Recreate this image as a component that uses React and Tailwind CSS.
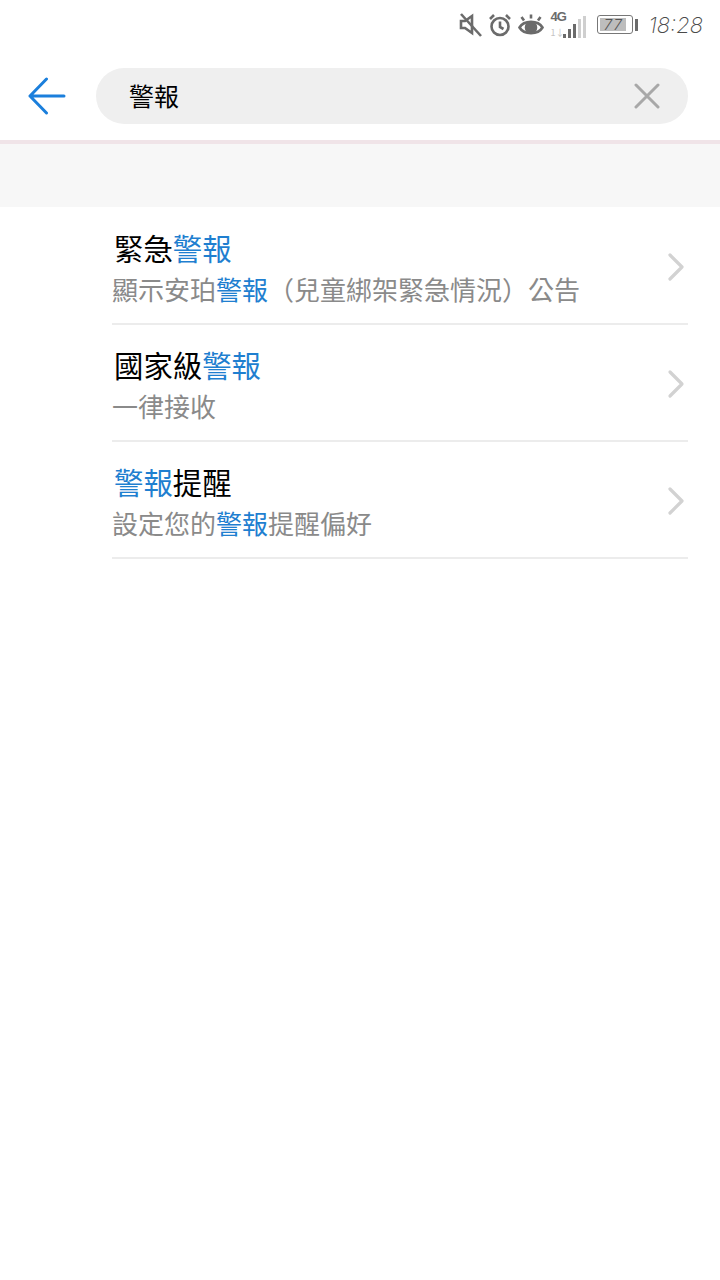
import React from "react";

const cjk = { fontFamily: '"Noto Sans CJK TC", "Noto Sans", sans-serif' };

function Hl({ children }) {
  return <span className="text-[#1f7fd0]">{children}</span>;
}

function Row({ title, sub }) {
  return (
    <div className="ml-[112px] mr-8 h-[117px] border-b-2 border-[#ececec] flex items-center justify-between">
      <div className="pt-[3px]">
        <div className="text-[29.4px] leading-[36px] text-black ml-[2px]">{title}</div>
        <div className="text-[26px] leading-[34px] mt-[7px] text-[#8a8a8a] whitespace-nowrap">{sub}</div>
      </div>
      <svg width="18" height="30" viewBox="0 0 18 30" className="mr-[3px] mt-[2px]" fill="none" stroke="#d2d2d2" strokeWidth="3.2" strokeLinecap="round" strokeLinejoin="round">
        <path d="M3 3 15 15 3 27" />
      </svg>
    </div>
  );
}

function StatusBar() {
  return (
    <div className="h-[48px] pt-px flex items-center justify-end pr-[17px] text-[#6b6b6b]">
      <svg width="24" height="26" viewBox="0 0 24 26" fill="none" stroke="#6b6b6b" strokeWidth="2.6" className="mr-[5px]">
        <path d="M2 9h4l7-5v17l-7-5H2z" />
        <path d="M2 2l20 22" />
      </svg>
      <svg width="24" height="24" viewBox="0 0 24 24" fill="none" stroke="#6b6b6b" strokeWidth="2.6" className="mr-[6px]">
        <circle cx="12" cy="13.5" r="8.5" />
        <path d="M12 8.5v5.5l3.5 2" />
        <path d="M2 6l4-4M22 6l-4-4" />
      </svg>
      <svg width="26" height="22" viewBox="0 0 26 22" fill="none" stroke="#6b6b6b" strokeWidth="2.6" className="mr-[6px]">
        <path d="M1.5 13.5C6 6 20 6 24.5 13.5 20 21 6 21 1.5 13.5z" />
        <circle cx="13" cy="13.5" r="5" fill="#6b6b6b" />
        <path d="M6 6.5L3.5 3M13 4.5V0.5M20 6.5L22.5 3" />
      </svg>
      <div className="w-[38px] h-[28px] relative mr-[9px]">
        <span className="absolute left-0 top-[-1px] text-[13px] leading-[13px] font-bold text-[#6b6b6b] tracking-[-1px]" style={{ fontFamily: '"Liberation Sans", sans-serif' }}>4G</span>
        <div className="absolute left-[13px] bottom-[1px] flex items-end gap-[2px]">
          <div className="w-[3px] h-[4px] bg-[#6b6b6b]" />
          <div className="w-[3px] h-[9px] bg-[#6b6b6b]" />
          <div className="w-[3px] h-[14px] bg-[#6b6b6b]" />
          <div className="w-[3px] h-[19px] bg-[#cfcfcf]" />
          <div className="w-[3px] h-[22px] bg-[#cfcfcf]" />
        </div>
        <span className="absolute left-0 bottom-[1px] text-[9px] leading-[10px] text-[#c4c4c4]">1↓</span>
      </div>
      <div className="flex items-center mr-[10px]">
        <div className="w-[36px] h-[19px] rounded-[3px] border border-[#777777] p-[2px]">
          <div className="w-[26px] h-full bg-[#bdbdbd] flex items-center justify-center">
            <span className="text-[15px] leading-none italic font-light tracking-[1px] text-[#555555]" style={{ fontFamily: 'Inter, sans-serif' }}>77</span>
          </div>
        </div>
        <div className="w-[3px] h-[12px] ml-[2px] bg-[#6b6b6b]" />
      </div>
      <span className="text-[22px] leading-none italic font-extralight text-[#4a4a4a]" style={{ fontFamily: 'Inter, sans-serif' }}>18:28</span>
    </div>
  );
}

export default function App() {
  return (
    <div className="w-[720px] min-h-[1280px] bg-white" style={cjk}>
      <StatusBar />
      <div className="h-[92px] flex items-center pt-[4px]">
        <svg width="38" height="38" viewBox="0 0 38 38" className="ml-[28px]" fill="none" stroke="#1b7fdc" strokeWidth="3" strokeLinecap="round" strokeLinejoin="round">
          <path d="M36 19H2M18.5 2 2 19l16.5 17" />
        </svg>
        <div className="ml-[30px] w-[592px] h-[56px] rounded-full bg-[#efefef] flex items-center justify-between pl-[33px] pr-[28px]">
          <span className="text-[25px] text-black">警報</span>
          <svg width="26" height="26" viewBox="0 0 26 26" fill="none" stroke="#a8a8a8" strokeWidth="3" strokeLinecap="round">
            <path d="M2 2l22 22M24 2L2 24" />
          </svg>
        </div>
      </div>
      <div className="h-[67px] bg-[#f7f7f7] border-t-4 border-[#f0e4e8]" />
      <div className="pt-px">
        <Row title={<>緊急<Hl>警報</Hl></>} sub={<>顯示安珀<Hl>警報</Hl>（兒童綁架緊急情況）公告</>} />
        <Row title={<>國家級<Hl>警報</Hl></>} sub="一律接收" />
        <Row title={<><Hl>警報</Hl>提醒</>} sub={<>設定您的<Hl>警報</Hl>提醒偏好</>} />
      </div>
    </div>
  );
}
